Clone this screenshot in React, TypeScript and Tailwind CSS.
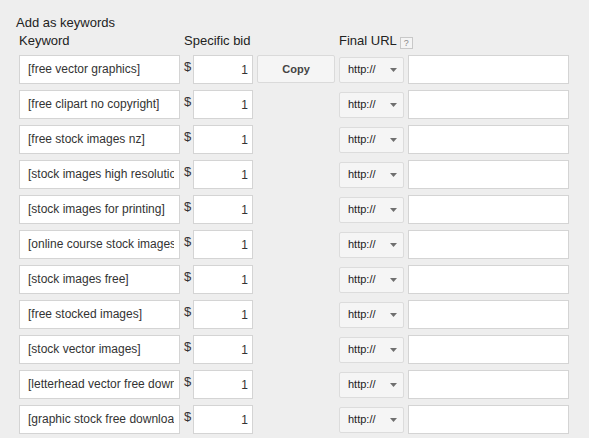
import React from "react";

const keywords = [
  "[free vector graphics]",
  "[free clipart no copyright]",
  "[free stock images nz]",
  "[stock images high resolution]",
  "[stock images for printing]",
  "[online course stock images]",
  "[stock images free]",
  "[free stocked images]",
  "[stock vector images]",
  "[letterhead vector free download]",
  "[graphic stock free download]",
];

function Row({ kw, first }: { kw: string; first: boolean }) {
  return (
    <div className="flex h-[29px]">
      <div className="w-[161px] h-[29px] border border-[#d4d4d4] bg-white flex items-center">
        <div className="ml-[8px] w-[146px] overflow-hidden whitespace-nowrap text-[12px] leading-[15px] text-[#333]">
          {kw}
        </div>
      </div>
      <div className="w-[13px] pl-[4px] pt-[4px] text-[13px] leading-[15px] text-[#333]">$</div>
      <div className="w-[60px] h-[29px] border border-[#d4d4d4] bg-white flex items-center justify-end pr-[4px] text-[12px] text-[#333]">
        1
      </div>
      {first ? (
        <div className="ml-[4px] w-[78px] h-[28px] border border-[#dadada] rounded-[2px] bg-[#f5f5f5] flex items-center justify-center text-[11px] font-bold text-[#444]">
          Copy
        </div>
      ) : (
        <div className="ml-[4px] w-[78px]" />
      )}
      <div className="ml-[4px] w-[65px] h-[26px] self-center border border-[#dcdcdc] rounded-[2px] bg-[#f5f5f5] flex items-center justify-between pl-[8px] pr-[6px] text-[11px] text-[#222]">
        <span>http://</span>
        <svg width="7" height="4" viewBox="0 0 7 4">
          <polygon points="0,0 7,0 3.5,4" fill="#6f6f6f" />
        </svg>
      </div>
      <div className="ml-[4px] w-[161px] h-[29px] border border-[#d4d4d4] bg-white" />
    </div>
  );
}

export default function App() {
  return (
    <div className="min-h-screen bg-[#eeeeee] pt-[14px] pl-[16px] font-['Liberation_Sans',Arial,sans-serif] text-[#222]">
      <div className="text-[13px] leading-[18px]">Add as keywords</div>
      <div className="flex ml-[3px] text-[13px] leading-[18px] h-[18px]">
        <div className="w-[165px]">Keyword</div>
        <div className="w-[155px]">Specific bid</div>
        <div className="flex items-start">
          <span>Final URL</span>
          <span className="ml-[3px] mt-[5px] w-[13px] h-[12px] border border-[#c8c8c8] bg-[#f4f4f4] flex items-center justify-center text-[9px] leading-[10px] text-[#888]">
            ?
          </span>
        </div>
      </div>
      <div className="mt-[5px] ml-[3px] flex flex-col gap-[6px]">
        {keywords.map((kw, i) => (
          <Row key={i} kw={kw} first={i === 0} />
        ))}
      </div>
    </div>
  );
}
